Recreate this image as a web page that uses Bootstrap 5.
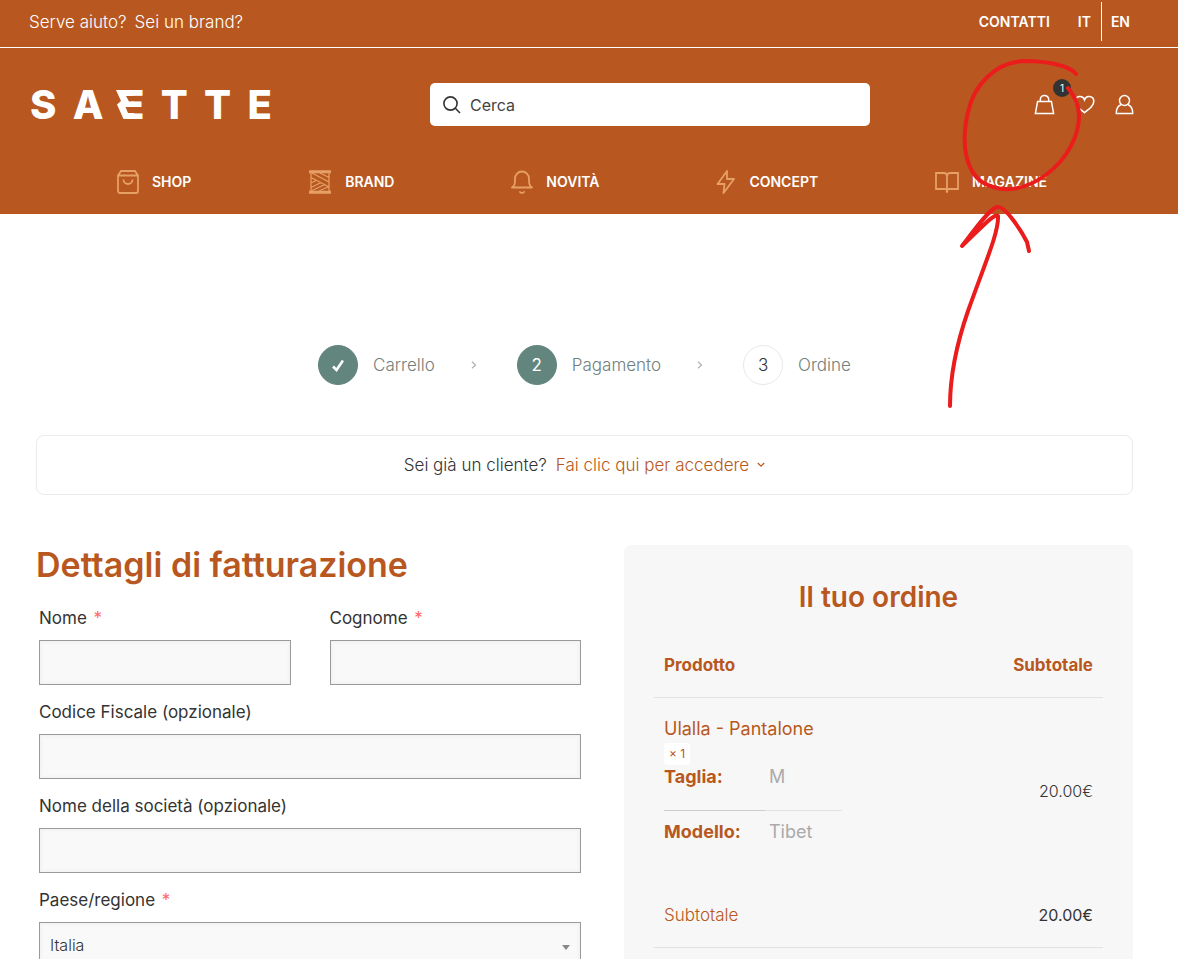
<!DOCTYPE html>
<html lang="it">
<head>
<meta charset="utf-8">
<meta name="viewport" content="width=device-width, initial-scale=1">
<title>Saette – Pagamento</title>
<link href="https://cdn.jsdelivr.net/npm/bootstrap@5.3.0/dist/css/bootstrap.min.css" rel="stylesheet">
<style>
:root{--rust:#b85820;--sand:#e6a066;--sage:#62857d;--ink:#333}
body{font-family:Inter,"Open Sans",sans-serif;font-size:17px;line-height:24px;color:var(--ink);overflow-x:hidden}
a{color:inherit;text-decoration:none}
svg{display:block;fill:none;stroke:currentColor;flex:none}
.site-header{background:var(--rust);color:#fff}
.topbar{height:48px;border-bottom:1px solid #fff;padding:0 48px 4px 29px}
.caps{font-size:14px;font-weight:600}
.help-link{font-weight:300}
.lang-link{line-height:39px}
.lang-link + .lang-link{border-left:1px solid #fff;padding-left:9px;margin-left:10px}
.brand-row{padding:35px 43px 0 30px;display:grid;grid-template-columns:400fr 440fr 265fr;align-items:center}
.wordmark{width:242px;font-size:40px;font-weight:800;line-height:43px}
.bolt{left:-4px;top:7px}
.search-box{height:43px;border-radius:5px;background:#fff;padding:0 13px;color:var(--ink)}
.search-box input{font-size:16px;color:var(--ink);background:none;padding:0 9px}
.search-box input::placeholder{color:#444;opacity:1}
.tools{gap:19px}
.count{width:18px;height:18px;left:19px;top:-15px;font-size:10px;line-height:18px;background:#333}
.main-nav{padding:37px 14px 0 0;height:88px}
.main-nav a{height:38px;gap:13px}
.main-nav svg{color:var(--sand)}
.scribble{right:94px;top:56px;color:#ea1c1c;pointer-events:none;z-index:5}
.checkout{padding:131px 45px 0 36px}
.steps{height:40px;font-weight:300;color:#71807c}
.step-dot{width:40px;height:40px;margin-right:15px;border:1px solid #e8e8e8;color:var(--ink)}
.step-done{background:var(--sage);border-color:var(--sage);color:#fff}
.chev{margin:0 40px 0 36px;color:#aab3b0}
.login-box{height:60px;margin:50px 0;border:1px solid #ebebeb;border-radius:8px;font-weight:300;gap:9px}
.rust{color:var(--rust)}
.columns{display:grid;grid-template-columns:545fr 509fr;gap:43px;align-items:start}
.billing h2{font-size:34px;line-height:40px;font-weight:600;margin:0 0 21px}
.fields{display:grid;grid-template-columns:1fr 1fr;column-gap:39px;row-gap:15px;padding-left:3px}
.wide{grid-column:1/-1}
.fields label{display:block;margin-bottom:10px}
.fields i{color:#f66;font-style:normal;margin-left:2px}
.fields input,.fields select{height:45px;border:1px solid #9a9a9a;border-radius:0;background-color:#f9f9f9;box-shadow:inset 0 0 4px #ececec}
.fields select{font-size:16px;font-weight:300;padding:0 10px;color:var(--ink);background-image:url("data:image/svg+xml,%3Csvg xmlns='http://www.w3.org/2000/svg' viewBox='0 0 8 5'%3E%3Cpath fill='%23888' d='M0 0h8L4 5z'/%3E%3C/svg%3E");background-size:8px 5px;background-position:right 10px top 22px}
.order{background:#f7f7f7;border-radius:8px;padding:32px 30px 30px}
.order h3{font-size:28px;line-height:40px;font-weight:600;margin:0 0 16px;text-align:center}
.sums{width:100%}
.sums th,.sums td{padding:20px 10px}
.sums tr{border-bottom:1px solid #e2e2e2}
.sums .product-row{border:0}
.sums .product-row td{padding:18px 10px 39px}
.sums .product-row .price{padding:0 10px}
.price{font-size:16px}
.product-name{font-size:18px;line-height:26px}
.qty{background:#fff;border-radius:3px;font-size:12px;line-height:22px;width:26px;margin-top:1px}
.traits{display:grid;grid-template-columns:101px 77px;margin:0;font-size:18px}
.traits dt,.traits dd{margin:0;line-height:24px}
.traits dt{font-weight:700;color:var(--rust)}
.traits dd{color:#aaa;padding-left:4px}
.traits .ruled{padding-bottom:21px;margin-bottom:9px;border-bottom:1px solid #e2e2e2}
.traits dt.ruled{border-color:#ccc}
</style>
</head>
<body>
<header class="site-header position-relative">
  <div class="topbar d-flex align-items-center">
    <a href="#" class="help-link me-2">Serve aiuto?</a><a href="#" class="help-link">Sei un brand?</a>
    <div class="caps d-flex align-items-center ms-auto">
      <a href="#" class="me-4 pe-1">CONTATTI</a>
      <a href="#" class="lang-link">IT</a><a href="#" class="lang-link">EN</a>
    </div>
  </div>
  <div class="brand-row">
    <a href="#" class="wordmark d-flex justify-content-between" aria-label="Saette">
      <span>S</span><span>A</span><span class="position-relative">E<svg class="bolt position-absolute" width="18" height="29" viewBox="0 0 18 29"><path d="M0 0h15v29H0z" fill="#b85820" stroke="none"/><path d="M0 0H18V6H10L13 11.500H18V17H9.500L12 23H18V29H7.500L1 14.500 5 11Z" fill="#fff" stroke="none"/></svg></span><span>T</span><span>T</span><span>E</span>
    </a>
    <form class="search-box d-flex align-items-center">
      <svg width="18" height="18" viewBox="0 0 18 18" stroke-width="1.6"><circle cx="7.5" cy="7.5" r="6.6"/><path d="M12.3 12.3 17 17"/></svg>
      <input type="search" class="border-0 flex-fill" placeholder="Cerca" aria-label="Cerca">
    </form>
    <div class="tools d-flex justify-content-end align-items-center">
      <a href="#" class="position-relative" aria-label="Carrello"><svg width="21" height="21" viewBox="0 0 21 21" stroke-width="1.5"><path d="M3.6 7.4H17.4L19.6 19.4H1.4Z"/><path d="M6.3 7.4V5.6a4.2 4.2 0 0 1 8.4 0V7.4"/></svg><span class="count position-absolute rounded-circle text-center">1</span></a>
      <a href="#" aria-label="Preferiti"><svg width="21" height="21" viewBox="0 0 21 21" stroke-width="1.6"><path d="M10.5 18.7C5 14.4 1.2 11.6 1.2 7.3a4.8 4.8 0 0 1 9.3-1.7 4.8 4.8 0 0 1 9.3 1.7c0 4.300-3.800 7.100-9.300 11.400Z"/></svg></a>
      <a href="#" aria-label="Profilo"><svg width="21" height="21" viewBox="0 0 21 21" stroke-width="1.500"><circle cx="10.500" cy="6.500" r="5"/><path d="M7 10.800C3.800 12 2.300 14.500 2.300 19.400H18.700C18.700 14.500 17.200 12 14 10.800"/></svg></a>
    </div>
  </div>
  <nav class="main-nav caps d-flex justify-content-evenly">
    <a href="#" class="d-flex align-items-center"><svg width="22" height="24" viewBox="0 0 22 24" stroke-width="1.800"><path d="M1 5.500H21V21a2 2 0 0 1-2 2H3a2 2 0 0 1-2-2ZM1 5.500 4 1H18L21 5.500"/><path d="M6.500 9.500c0 6 9 6 9 0"/></svg>SHOP</a>
    <a href="#" class="d-flex align-items-center"><svg width="24" height="24" viewBox="0 0 24 24" stroke-width="1.200"><path d="M1 1.700H23M1 22.300H23" stroke-width="3"/><path d="M3 3V21M21 3V21M4 3 21 12M12 3 21 7.500M3 7.500 21 17M3 13 8 10.500M3 17.500 13 12.500M3 21 17 14.500M11 21 21 16.500"/></svg>BRAND</a>
    <a href="#" class="d-flex align-items-center"><svg width="22" height="24" viewBox="0 0 22 24" stroke-width="1.800" stroke-linecap="round" stroke-linejoin="round"><path d="M1 17.500C4 15.500 4 13 4 8.500a7 7 0 0 1 14 0c0 4.500 0 7 3 9ZM9 22c1 1.200 3 1.200 4 0"/></svg>NOVITÀ</a>
    <a href="#" class="d-flex align-items-center"><svg width="20" height="24" viewBox="0 0 20 24" stroke-width="1.800" stroke-linejoin="round"><path d="M11 1 1.500 14H8.500L7.500 23 18 9H11Z"/></svg>CONCEPT</a>
    <a href="#" class="d-flex align-items-center"><svg width="24" height="22" viewBox="0 0 24 22" stroke-width="1.800"><path d="M1 2H9a3 3 0 0 1 3 3 3 3 0 0 1 3-3h8V18H14a2 2 0 0 0-2 3 2 2 0 0 0-2-3H1ZM12 5V21"/></svg>MAGAZINE</a>
  </nav>
  <svg class="scribble position-absolute" width="144" height="358" viewBox="940 56 144 358" stroke-width="4" stroke-linecap="round" stroke-linejoin="round" aria-hidden="true"><path d="M1076 74C1070 66 1048 61 1025 61C995 62 974 85 968 112C960 146 967 172 982 182C1000 193 1023 192 1047 174C1068 158 1079 135 1079 116C1079 104 1074 96 1068 88"/><path d="M950 406C950 370 959 337 968 311C985 263 999 232 998 216C995 212 980 229 962 246C973 232 988 210 997 207C1005 205 1022 232 1027 242L1029 251"/></svg>
</header>

<main class="checkout">
  <div class="steps d-flex justify-content-center align-items-center">
    <span class="step-dot step-done rounded-circle d-flex align-items-center justify-content-center"><svg width="12" height="13" viewBox="0 0 12 13" stroke-width="2.600"><path d="M1 7.500 4.500 11 11 1.500"/></svg></span><a href="#">Carrello</a>
    <svg class="chev" width="6" height="8" viewBox="0 0 6 8" stroke-width="1.200"><path d="M1 .8 4.500 4 1 7.200"/></svg>
    <span class="step-dot step-done rounded-circle d-flex align-items-center justify-content-center fw-normal">2</span><span>Pagamento</span>
    <svg class="chev" width="6" height="8" viewBox="0 0 6 8" stroke-width="1.200"><path d="M1 .8 4.500 4 1 7.200"/></svg>
    <span class="step-dot rounded-circle d-flex align-items-center justify-content-center">3</span><span>Ordine</span>
  </div>

  <div class="login-box d-flex justify-content-center align-items-center">
    <span>Sei già un cliente?</span>
    <a href="#" class="rust d-flex align-items-center gap-2">Fai clic qui per accedere <svg width="8" height="6" viewBox="0 0 8 6" stroke-width="1.300"><path d="M.8 1 4 4.200 7.200 1"/></svg></a>
  </div>

  <div class="columns">
    <form class="billing">
      <h2 class="rust">Dettagli di fatturazione</h2>
      <div class="fields">
        <div><label for="nome">Nome <i>*</i></label><input id="nome" type="text" class="form-control"></div>
        <div><label for="cognome">Cognome <i>*</i></label><input id="cognome" type="text" class="form-control"></div>
        <div class="wide"><label for="cf">Codice Fiscale (opzionale)</label><input id="cf" type="text" class="form-control"></div>
        <div class="wide"><label for="societa">Nome della società (opzionale)</label><input id="societa" type="text" class="form-control"></div>
        <div class="wide"><label for="paese">Paese/regione <i>*</i></label><select id="paese" class="form-select"><option>Italia</option></select></div>
      </div>
    </form>

    <section class="order">
      <h3 class="rust">Il tuo ordine</h3>
      <table class="sums">
        <thead><tr class="rust"><th>Prodotto</th><th class="text-end">Subtotale</th></tr></thead>
        <tbody>
          <tr class="product-row">
            <td><div class="product-name rust">Ulalla - Pantalone</div>
              <div class="qty rust text-center">× 1</div>
              <dl class="traits"><dt class="ruled">Taglia:</dt><dd class="ruled">M</dd><dt>Modello:</dt><dd>Tibet</dd></dl></td>
            <td class="price text-end fw-light">20.00€</td>
          </tr>
          <tr><td class="rust fw-light">Subtotale</td><td class="price text-end">20.00€</td></tr>
        </tbody>
      </table>
    </section>
  </div>
</main>
<script src="https://cdn.jsdelivr.net/npm/bootstrap@5.3.0/dist/js/bootstrap.bundle.min.js"></script>
</body>
</html>
